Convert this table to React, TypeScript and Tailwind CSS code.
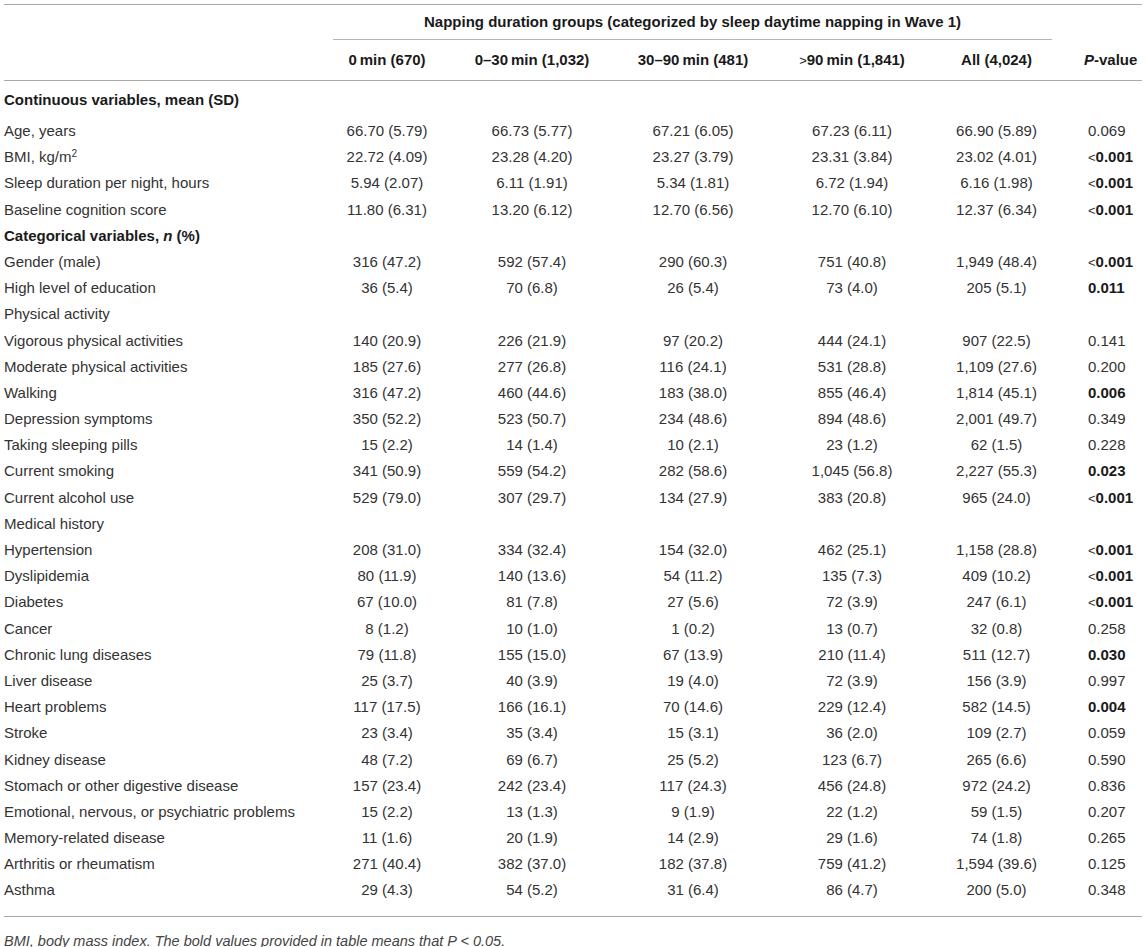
import type { ReactNode } from 'react';

interface Row {
  label: ReactNode;
  vals?: string[];
  p?: string;
  bold?: boolean; // p-value < 0.05
  section?: boolean;
}

const rows: Row[] = [
  { label: 'Continuous variables, mean (SD)', section: true },
  { label: 'Age, years', vals: ['66.70 (5.79)', '66.73 (5.77)', '67.21 (6.05)', '67.23 (6.11)', '66.90 (5.89)'], p: '0.069' },
  { label: <>BMI, kg/m<sup className="text-[10px]">2</sup></>, vals: ['22.72 (4.09)', '23.28 (4.20)', '23.27 (3.79)', '23.31 (3.84)', '23.02 (4.01)'], p: '<0.001', bold: true },
  { label: 'Sleep duration per night, hours', vals: ['5.94 (2.07)', '6.11 (1.91)', '5.34 (1.81)', '6.72 (1.94)', '6.16 (1.98)'], p: '<0.001', bold: true },
  { label: 'Baseline cognition score', vals: ['11.80 (6.31)', '13.20 (6.12)', '12.70 (6.56)', '12.70 (6.10)', '12.37 (6.34)'], p: '<0.001', bold: true },
  { label: <>Categorical variables, <i>n</i> (%)</>, section: true },
  { label: 'Gender (male)', vals: ['316 (47.2)', '592 (57.4)', '290 (60.3)', '751 (40.8)', '1,949 (48.4)'], p: '<0.001', bold: true },
  { label: 'High level of education', vals: ['36 (5.4)', '70 (6.8)', '26 (5.4)', '73 (4.0)', '205 (5.1)'], p: '0.011', bold: true },
  { label: 'Physical activity' },
  { label: 'Vigorous physical activities', vals: ['140 (20.9)', '226 (21.9)', '97 (20.2)', '444 (24.1)', '907 (22.5)'], p: '0.141' },
  { label: 'Moderate physical activities', vals: ['185 (27.6)', '277 (26.8)', '116 (24.1)', '531 (28.8)', '1,109 (27.6)'], p: '0.200' },
  { label: 'Walking', vals: ['316 (47.2)', '460 (44.6)', '183 (38.0)', '855 (46.4)', '1,814 (45.1)'], p: '0.006', bold: true },
  { label: 'Depression symptoms', vals: ['350 (52.2)', '523 (50.7)', '234 (48.6)', '894 (48.6)', '2,001 (49.7)'], p: '0.349' },
  { label: 'Taking sleeping pills', vals: ['15 (2.2)', '14 (1.4)', '10 (2.1)', '23 (1.2)', '62 (1.5)'], p: '0.228' },
  { label: 'Current smoking', vals: ['341 (50.9)', '559 (54.2)', '282 (58.6)', '1,045 (56.8)', '2,227 (55.3)'], p: '0.023', bold: true },
  { label: 'Current alcohol use', vals: ['529 (79.0)', '307 (29.7)', '134 (27.9)', '383 (20.8)', '965 (24.0)'], p: '<0.001', bold: true },
  { label: 'Medical history' },
  { label: 'Hypertension', vals: ['208 (31.0)', '334 (32.4)', '154 (32.0)', '462 (25.1)', '1,158 (28.8)'], p: '<0.001', bold: true },
  { label: 'Dyslipidemia', vals: ['80 (11.9)', '140 (13.6)', '54 (11.2)', '135 (7.3)', '409 (10.2)'], p: '<0.001', bold: true },
  { label: 'Diabetes', vals: ['67 (10.0)', '81 (7.8)', '27 (5.6)', '72 (3.9)', '247 (6.1)'], p: '<0.001', bold: true },
  { label: 'Cancer', vals: ['8 (1.2)', '10 (1.0)', '1 (0.2)', '13 (0.7)', '32 (0.8)'], p: '0.258' },
  { label: 'Chronic lung diseases', vals: ['79 (11.8)', '155 (15.0)', '67 (13.9)', '210 (11.4)', '511 (12.7)'], p: '0.030', bold: true },
  { label: 'Liver disease', vals: ['25 (3.7)', '40 (3.9)', '19 (4.0)', '72 (3.9)', '156 (3.9)'], p: '0.997' },
  { label: 'Heart problems', vals: ['117 (17.5)', '166 (16.1)', '70 (14.6)', '229 (12.4)', '582 (14.5)'], p: '0.004', bold: true },
  { label: 'Stroke', vals: ['23 (3.4)', '35 (3.4)', '15 (3.1)', '36 (2.0)', '109 (2.7)'], p: '0.059' },
  { label: 'Kidney disease', vals: ['48 (7.2)', '69 (6.7)', '25 (5.2)', '123 (6.7)', '265 (6.6)'], p: '0.590' },
  { label: 'Stomach or other digestive disease', vals: ['157 (23.4)', '242 (23.4)', '117 (24.3)', '456 (24.8)', '972 (24.2)'], p: '0.836' },
  { label: 'Emotional, nervous, or psychiatric problems', vals: ['15 (2.2)', '13 (1.3)', '9 (1.9)', '22 (1.2)', '59 (1.5)'], p: '0.207' },
  { label: 'Memory-related disease', vals: ['11 (1.6)', '20 (1.9)', '14 (2.9)', '29 (1.6)', '74 (1.8)'], p: '0.265' },
  { label: 'Arthritis or rheumatism', vals: ['271 (40.4)', '382 (37.0)', '182 (37.8)', '759 (41.2)', '1,594 (39.6)'], p: '0.125' },
  { label: 'Asthma', vals: ['29 (4.3)', '54 (5.2)', '31 (6.4)', '86 (4.7)', '200 (5.0)'], p: '0.348' },
];

const grid = 'grid grid-cols-[329px_108px_182px_140px_178px_111px_90px]';

function PValue({ p, bold }: { p: string; bold?: boolean }) {
  if (p.startsWith('<')) {
    return (
      <span>
        <span className="font-normal text-[13px]">&lt;</span>
        <span className={bold ? 'font-bold text-[#1a1a1a]' : ''}>{p.slice(1)}</span>
      </span>
    );
  }
  return <span className={bold ? 'font-bold text-[#1a1a1a]' : ''}>{p}</span>;
}

export default function App() {
  return (
    <div className="w-[1146px] bg-white pt-[4px] pl-[4px] font-['Liberation_Sans',Arial,sans-serif] text-[15px] text-[#333]">
      <div className="w-[1138px] border-t border-[#a9a9a9]">
        {/* header */}
        <div className={`${grid} font-bold text-[#1a1a1a]`}>
          <div />
          <div className="col-span-5 flex h-[35px] items-center justify-center border-b border-[#b5b5b5]">
            Napping duration groups (categorized by sleep daytime napping in Wave 1)
          </div>
          <div />
        </div>
        <div className={`${grid} h-[41px] items-center border-b border-[#a9a9a9] font-bold text-[#1a1a1a]`}>
          <div />
          <div className="text-center">0&#8201;min (670)</div>
          <div className="text-center">0–30&#8201;min (1,032)</div>
          <div className="text-center">30–90&#8201;min (481)</div>
          <div className="text-center"><span className="font-normal text-[13px]">&gt;</span>90&#8201;min (1,841)</div>
          <div className="text-center">All (4,024)</div>
          <div className="pl-[32px]"><i>P</i>-value</div>
        </div>

        {/* body */}
        <div className="flex flex-col pt-[6px] pb-[12px] border-b border-[#a9a9a9]">
          {rows.map((r, i) => (
            <div key={i} className={`${grid} h-[26.2px] items-center ${i === 0 ? 'mb-[5px]' : ''}`}>
              <div className={r.section ? 'font-bold text-[#1a1a1a]' : ''}>{r.label}</div>
              {r.vals ? (
                <>
                  {r.vals.map((v, j) => (
                    <div key={j} className="text-center">{v}</div>
                  ))}
                  <div className="pl-[36px]">
                    <PValue p={r.p!} bold={r.bold} />
                  </div>
                </>
              ) : null}
            </div>
          ))}
        </div>

        <div className="pt-[14px] text-[14.5px] italic text-[#444]">
          BMI, body mass index. The bold values provided in table means that P &lt; 0.05.
        </div>
      </div>
    </div>
  );
}
